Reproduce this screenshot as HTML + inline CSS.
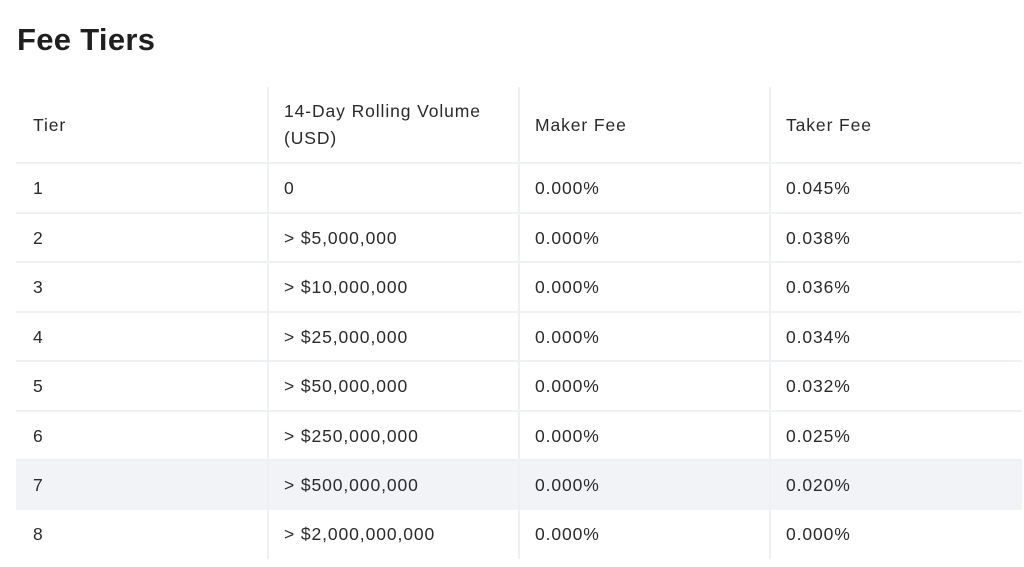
<!DOCTYPE html>
<html><head><meta charset="utf-8"><style>
body{margin:0;background:#fff;font-family:"Liberation Sans",sans-serif;color:#222;width:1024px;height:567px;overflow:hidden;position:relative}
h1{position:absolute;left:17px;top:21px;margin:0;font-size:31px;font-weight:600;color:#1f1f1f;line-height:38px;letter-spacing:0.3px}
.r{position:absolute;left:16px;width:1006px;border-top:2px solid #eef0f4;box-sizing:border-box}
.c{position:absolute;top:0;bottom:0;font-size:17.5px;letter-spacing:0.9px;color:#2a2a2a;display:flex;align-items:center;padding-left:17px;box-sizing:border-box;line-height:27px}
.c1{left:0;width:251px}.c2{left:251px;width:251px;border-left:2px solid #eef0f4;padding-left:15px}.c3{left:502px;width:251px;border-left:2px solid #eef0f4;padding-left:15px}.c4{left:753px;width:253px;border-left:2px solid #eef0f4;padding-left:15px}
.hl{background:#f2f3f6}
</style></head><body>
<h1>Fee Tiers</h1>
<div class="r" style="top:87px;height:76px;border-top:none"><div class="c c1">Tier</div><div class="c c2">14-Day Rolling Volume<br>(USD)</div><div class="c c3">Maker Fee</div><div class="c c4">Taker Fee</div></div>
<div class="r" style="top:162px;height:51px"><div class="c c1">1</div><div class="c c2">0</div><div class="c c3">0.000%</div><div class="c c4">0.045%</div></div>
<div class="r" style="top:212px;height:50px"><div class="c c1">2</div><div class="c c2">&gt; $5,000,000</div><div class="c c3">0.000%</div><div class="c c4">0.038%</div></div>
<div class="r" style="top:261px;height:51px"><div class="c c1">3</div><div class="c c2">&gt; $10,000,000</div><div class="c c3">0.000%</div><div class="c c4">0.036%</div></div>
<div class="r" style="top:311px;height:50px"><div class="c c1">4</div><div class="c c2">&gt; $25,000,000</div><div class="c c3">0.000%</div><div class="c c4">0.034%</div></div>
<div class="r" style="top:360px;height:51px"><div class="c c1">5</div><div class="c c2">&gt; $50,000,000</div><div class="c c3">0.000%</div><div class="c c4">0.032%</div></div>
<div class="r" style="top:410px;height:50px"><div class="c c1">6</div><div class="c c2">&gt; $250,000,000</div><div class="c c3">0.000%</div><div class="c c4">0.025%</div></div>
<div class="r hl" style="top:459px;height:51px"><div class="c c1">7</div><div class="c c2">&gt; $500,000,000</div><div class="c c3">0.000%</div><div class="c c4">0.020%</div></div>
<div class="r" style="top:509px;height:50px;border-top:none"><div class="c c1">8</div><div class="c c2">&gt; $2,000,000,000</div><div class="c c3">0.000%</div><div class="c c4">0.000%</div></div>
</body></html>
